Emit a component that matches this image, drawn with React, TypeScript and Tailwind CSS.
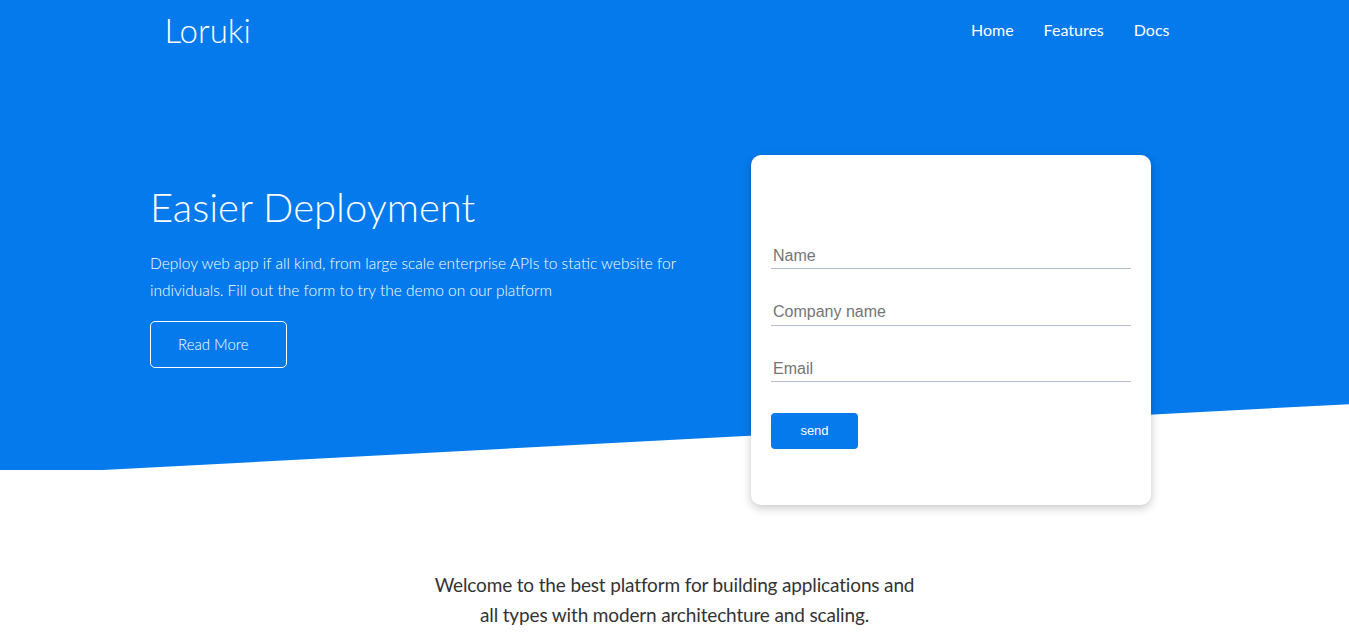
const links = ['Home', 'Features', 'Docs']

const fields = ['Name', 'Company name', 'Email']

export default function App() {
  return (
    <div className="min-h-screen bg-white font-['Lato',sans-serif] text-[#333]">
      <div className="relative">
        {/* slanted blue backdrop */}
        <div className="absolute inset-x-0 top-0 h-[470px] bg-[#047aed] [clip-path:polygon(0_0,100%_0,100%_86%,7.6%_100%,0_100%)]" />

        {/* Navbar */}
        <nav className="relative mx-auto flex h-[60px] w-[1100px] items-center justify-between px-10 text-white">
          <h1 className="text-[33px] font-light leading-none">Loruki</h1>
          <ul className="flex">
            {links.map((l) => (
              <li key={l}>
                <a href="#" className="px-[15px] text-base">
                  {l}
                </a>
              </li>
            ))}
          </ul>
        </nav>

        {/* Showcase */}
        <section className="relative flex pl-[150px] pt-[95px]">
          <div className="w-[601px] pt-[28px] text-white">
            <h2 className="text-[40px] font-light leading-[1.2]">Easier Deployment</h2>
            <p className="mt-[19px] w-[545px] text-[15.5px] font-light leading-[27px]">
              Deploy web app if all kind, from large scale enterprise APIs to static website for
              individuals. Fill out the form to try the demo on our platform
            </p>
            <a
              href="#"
              className="mt-[17px] flex h-[47px] w-[137px] items-center rounded-[5px] border border-white pl-[27px] text-[15px] font-light"
            >
              Read More
            </a>
          </div>

          <div className="h-[350px] w-[400px] rounded-[10px] bg-white px-5 pt-[88px] shadow-[0_3px_10px_rgba(0,0,0,0.22)]">
            <form className="flex flex-col gap-[30.5px] font-['Liberation_Sans',sans-serif]">
              {fields.map((f) => (
                <input
                  key={f}
                  type="text"
                  placeholder={f}
                  className="h-[26px] w-full border-b border-[#b4becb] px-0.5 text-base outline-none placeholder:text-[#757575]"
                />
              ))}
              <button
                type="button"
                className="h-9 w-[87px] rounded-[4px] bg-[#047aed] text-[13px] text-white"
              >
                send
              </button>
            </form>
          </div>
        </section>
      </div>

      {/* Stats intro */}
      <section className="mx-auto mt-[65px] w-[495px] text-center text-[19px] leading-[30px] tracking-[-0.15px]">
        <p>
          Welcome to the best platform for building applications and all types with modern
          architechture and scaling.
        </p>
      </section>
    </div>
  )
}
